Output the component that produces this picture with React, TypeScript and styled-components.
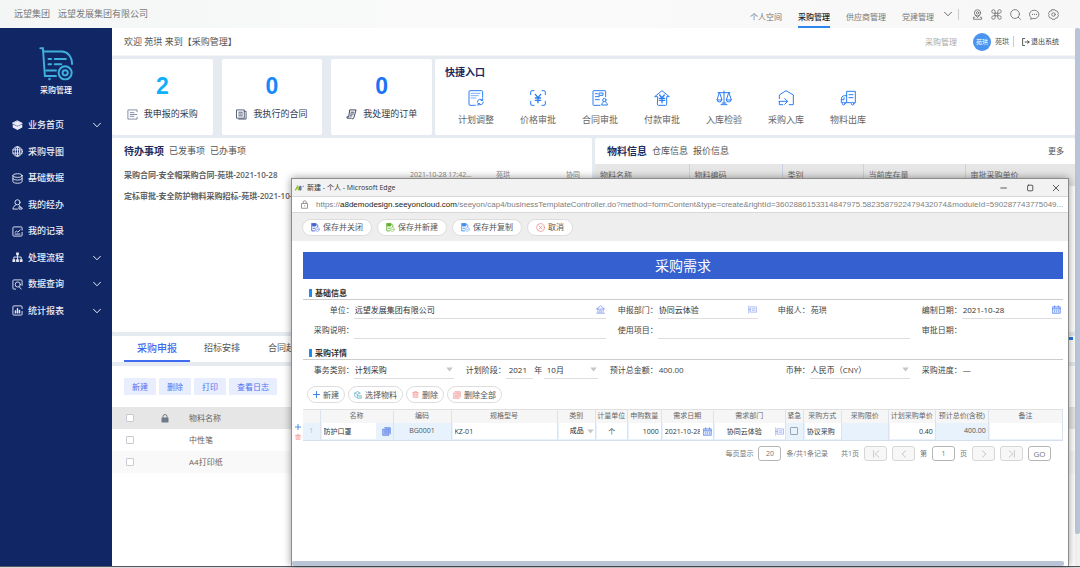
import React from 'react';
import styled, { createGlobalStyle, css } from 'styled-components';

const GlobalStyle = createGlobalStyle`
  *, *::before, *::after { box-sizing: border-box; }
  body {
    margin: 0;
    font-family: "Open Sans", "Noto Sans CJK SC", sans-serif;
    font-size: 8px;
    line-height: 12px;
    color: #555;
    background: #fff;
  }
  button, input, select { font: inherit; color: inherit; margin: 0; padding: 0; border: 0; background: none; border-radius: 0; }
  button { cursor: pointer; white-space: nowrap; }
  input, select { min-width: 0; outline: none; }
  ul { list-style: none; margin: 0; padding: 0; }
  a { color: inherit; text-decoration: none; }
  h1, h2, h3, p { margin: 0; font-weight: inherit; font-size: inherit; }
  svg { display: block; flex: none; }
`;

/* ---------- page frame ---------- */

const Page = styled.div`
  position: relative;
  display: flex;
  flex-direction: column;
  min-height: 100vh;
`;

const Header = styled.header`
  display: flex;
  align-items: stretch;
  height: 28px;
  padding: 0 21px 0 14px;
  background: linear-gradient(90deg, #f4f6f6, #fafafa 45%, #f7f7f7);
`;

const Crumbs = styled.div`
  display: flex;
  align-items: center;
  gap: 8px;
  flex: 1;
  font-size: 9px;
  color: #777;
`;

const TopNav = styled.nav`
  display: flex;
  align-items: stretch;
  gap: 16px;
`;

const TopLink = styled.a<{ $active?: boolean }>`
  display: flex;
  align-items: center;
  padding-top: ${p => (p.$active ? 7 : 5)}px;
  color: ${p => (p.$active ? '#222' : '#777')};
  font-weight: ${p => (p.$active ? 500 : 400)};
  border-bottom: ${p => (p.$active ? '2px solid #2a86ee' : '0')};
`;

const HeaderTools = styled.div`
  display: flex;
  align-items: center;
  gap: 8px;
  color: #6c6c6c;
`;

const HeaderMore = styled.span`
  display: flex;
  align-items: center;
  gap: 6px;
  margin: 0 5px 0 -6px;
`;

const IconButton = styled.button`
  display: flex;
`;

const Divider = styled.span`
  width: 1px;
  height: 11px;
  background: #ccc;
`;

const Workspace = styled.div`
  display: flex;
  flex: 1;
`;

const Taskbar = styled.footer`
  height: 2px;
  border-top: 1px solid #55575c;
  background: #ddd9dc;
`;

/* ---------- sidebar ---------- */

const Sidebar = styled.aside`
  width: 112px;
  flex: none;
  padding-top: 19px;
  background: #112665;
  color: #e8ebf5;
`;

const Brand = styled.div`
  display: flex;
  flex-direction: column;
  align-items: center;
  gap: 3px;
  font-weight: 500;
  color: #fff;
`;

const Menu = styled.ul`
  display: grid;
  grid-auto-rows: 1fr;
  height: 212px;
  margin-top: 16px;
  font-size: 9px;
  font-weight: 500;
`;

const MenuLink = styled.a`
  display: flex;
  align-items: center;
  height: 100%;
  gap: 5px;
  padding: 0 11px 0 12px;
  span { flex: 1; }
`;

/* ---------- main ---------- */

const Main = styled.main`
  flex: 1;
  min-width: 0;
  display: flex;
  flex-direction: column;
  background: #e5ebf1;
`;

const ScrollRail = styled.div`
  width: 5px;
  flex: none;
  background: #f1f1f1;
  &::before {
    content: '';
    display: block;
    height: 94%;
    border-radius: 2px;
    background: #b9c4d6;
  }
`;

const WelcomeBar = styled.div`
  display: flex;
  align-items: center;
  height: 28px;
  padding: 0 16px 0 12px;
  background: #fff;
  font-size: 9px;
  border-bottom: 1px solid #f2f4f7;
`;

const UserArea = styled.div`
  display: flex;
  align-items: center;
  gap: 4px;
  margin-left: auto;
  font-size: 7px;
`;

const ModuleName = styled.span`
  margin-right: 12px;
  font-size: 8px;
  color: #aaa;
`;

const Avatar = styled.span`
  width: 18px;
  height: 18px;
  border-radius: 50%;
  background: #4a93f0;
  color: #fff;
  font-size: 6px;
  line-height: 18px;
  text-align: center;
`;

const Exit = styled.a`
  display: flex;
  align-items: center;
  gap: 1px;
  padding-left: 4px;
  color: #444;
`;

const OverviewRow = styled.div`
  display: grid;
  grid-template-columns: minmax(0, 1fr) minmax(0, 2fr);
  gap: 3px;
  padding: 3px 0;
`;

const Stats = styled.div`
  display: grid;
  grid-template-columns: repeat(3, 1fr);
  gap: 9px;
`;

const StatCard = styled.section`
  display: flex;
  flex-direction: column;
  align-items: center;
  height: 76px;
  padding-top: 14px;
  background: #fff;
  border-radius: 2px;
`;

const StatNumber = styled.strong<{ $color: string }>`
  font: bold 23px/26px "Liberation Sans", sans-serif;
  color: ${p => p.$color};
`;

const StatLabel = styled.p`
  display: flex;
  align-items: center;
  gap: 6px;
  margin-top: 9px;
  font-size: 9px;
  color: #333a4d;
`;

const QuickPanel = styled.section`
  padding: 7px 10px 0;
  background: #fff;
  border-radius: 2px;
`;

const PanelTitle = styled.h2`
  font-size: 10px;
  font-weight: 700;
  color: #1d2a5e;
`;

const QuickList = styled.ul`
  display: flex;
  margin-top: 12px;
`;

const QuickLink = styled.a`
  display: flex;
  flex-direction: column;
  align-items: center;
  gap: 8px;
  width: 62px;
  font-size: 9px;
  color: #666;
`;

const ListsRow = styled.div`
  display: grid;
  grid-template-columns: minmax(0, 1fr) minmax(0, 1fr);
  gap: 3px;
  height: 194px;
`;

const Panel = styled.section`
  background: #fff;
  border-radius: 2px;
`;

const TabLine = styled.div`
  display: flex;
  align-items: center;
  gap: 5px;
  height: 26px;
  padding: 0 11px 0 12px;
`;

const TextTab = styled.button<{ $active?: boolean }>`
  font-size: ${p => (p.$active ? 10 : 9)}px;
  font-weight: ${p => (p.$active ? 700 : 400)};
  color: ${p => (p.$active ? '#1d2a5e' : '#555')};
`;

const More = styled.a`
  margin-left: auto;
`;

const TodoItem = styled.li`
  display: grid;
  grid-template-columns: 286px 86px 70px 1fr;
  height: 21px;
  align-items: center;
  padding-left: 12px;
  font-size: 7px;
  color: #888;
  a { font-size: 8px; font-weight: 600; color: #606060; white-space: nowrap; }
`;

const MaterialTable = styled.table`
  width: 100%;
  table-layout: fixed;
  border-collapse: collapse;
  th {
    height: 22px;
    padding: 0 0 0 5px;
    text-align: left;
    font-weight: 400;
    color: #666;
    background: #e6e6e6;
    border-right: 1px solid #c9d2e2;
  }
`;

const BottomTabs = styled.div`
  display: flex;
  height: 26px;
  margin: 4px 0;
  padding-left: 12px;
  background: #fff;
`;

const BottomTab = styled.button<{ $active?: boolean }>`
  width: ${p => (p.$active ? 66 : 64)}px;
  border-bottom: 2px solid ${p => (p.$active ? '#3f6bf0' : 'transparent')};
  font-size: ${p => (p.$active ? 10 : 9)}px;
  font-weight: ${p => (p.$active ? 500 : 400)};
  color: ${p => (p.$active ? '#3f6bf0' : '#555')};
`;

const TabMarker = styled.i`
  width: 4px;
  height: 3px;
  margin: 1px 2px 0 auto;
  background: #1f7ce8;
`;

const BottomPanel = styled.section`
  flex: 1;
  padding-top: 12px;
  background: #fff;
`;

const ActionBar = styled.div`
  display: flex;
  gap: 3px;
  padding-left: 12px;
  margin-bottom: 12px;
`;

const SoftButton = styled.button`
  height: 17px;
  padding: 0 8px;
  border-radius: 1px;
  background: #e9eefe;
  color: #4c72f2;
`;

const RecordTable = styled.table`
  width: 100%;
  table-layout: fixed;
  border-collapse: collapse;
  th, td { height: 22px; padding: 0; text-align: left; font-weight: 400; color: #666; }
  th:first-child, td:first-child { padding-left: 14px; }
  thead tr { background: #e6e6e6; }
  tbody tr:nth-child(even) { background: #f9f9f9; }
`;

const Check = styled.input.attrs({ type: 'checkbox' })`
  appearance: none;
  display: block;
  width: 8px;
  height: 8px;
  border: 1px solid #c5cad4;
  border-radius: 1px;
  background: #fff;
`;

/* ---------- pop-up window ---------- */

const Window = styled.div`
  position: absolute;
  top: 178px;
  right: 11px;
  bottom: 2px;
  left: 291px;
  display: flex;
  flex-direction: column;
  background: #fff;
  border: 1px solid #8c8c8c;
  border-bottom: 0;
  box-shadow: 0 0 8px rgba(0, 0, 0, 0.4);
`;

const TitleBar = styled.div`
  display: flex;
  align-items: center;
  height: 17px;
  padding: 0 8px 0 3px;
  background: #f2f2f2;
  font-size: 7px;
  color: #333;
  gap: 3px;
`;

const WindowControls = styled.div`
  display: flex;
  gap: 18px;
  margin-left: auto;
`;

const AddressBar = styled.div`
  display: flex;
  align-items: center;
  gap: 7px;
  height: 17px;
  padding: 0 0 0 8px;
  border: solid #d8d8d8;
  border-width: 1px 0;
  color: #808080;
  font-family: "Liberation Sans", sans-serif;
  p { white-space: nowrap; }
  b { font-weight: 400; color: #222; }
`;

const FormToolbar = styled.div`
  display: flex;
  align-items: center;
  gap: 5px;
  height: 28px;
  padding-left: 10px;
  background: #eee;
`;

const pill = css`
  display: flex;
  align-items: center;
  gap: 3px;
  border: 1px solid #dcdcdc;
  border-radius: 9px;
  background: #fff;
  color: #555;
`;

const SaveButton = styled.button`
  ${pill}
  height: 17px;
  padding: 0 8px;
`;

const RowButton = styled.button`
  ${pill}
  height: 17px;
  padding: 0 5px;
`;

const FormBody = styled.form`
  flex: 1;
  display: flex;
  flex-direction: column;
  padding: 11px 5px 0 11px;
`;

const Banner = styled.h1`
  height: 27px;
  margin-bottom: 1px;
  background: #3461cf;
  color: #fff;
  font-size: 14px;
  line-height: 28px;
  text-align: center;
`;

const SectionTitle = styled.h2`
  display: flex;
  align-items: flex-end;
  gap: 3px;
  height: 20px;
  padding: 0 0 0 6px;
  border-bottom: 1px solid #ccc;
  color: #333;
  font-weight: 600;
  &::before {
    content: '';
    width: 3px;
    height: 8px;
    margin-bottom: 2px;
    background: #1e88f5;
  }
`;

const Fields = styled.div`
  display: grid;
  grid-template-columns: repeat(15, minmax(0, 1fr));
  grid-auto-rows: 20px;
  color: #444;
`;

const FieldLabel = styled.label`
  align-self: center;
  justify-self: end;
  white-space: nowrap;
  line-height: 20px;
`;

const FieldValue = styled.div<{ $span: number; $plain?: boolean }>`
  grid-column: span ${p => p.$span};
  display: flex;
  align-items: center;
  height: 19px;
  margin-right: 1px;
  padding: 1px 1px 0;
  border-bottom: 1px solid ${p => (p.$plain ? 'transparent' : '#dedede')};
  input, select { flex: 1; width: 100%; height: 16px; color: #333; }
  select { appearance: none; }
`;

const PhaseValue = styled.div`
  grid-column: span 2;
  display: grid;
  grid-template-columns: 1fr 11px 2fr;
  margin-right: 9px;
  height: 19px;
  align-items: center;
  text-align: center;
`;

const PhaseBox = styled.div`
  display: flex;
  align-items: center;
  height: 19px;
  padding: 1px 1px 0 3px;
  border-bottom: 1px solid #dedede;
  input, select { flex: 1; width: 100%; height: 16px; color: #333; appearance: none; }
`;

const RowTools = styled.div`
  display: flex;
  gap: 3px;
  margin: 6px 0 6px 4px;
`;

const GridArea = styled.div`
  display: flex;
  margin-left: -11px;
`;

const RowActions = styled.div`
  display: flex;
  flex-direction: column;
  align-items: center;
  gap: 4px;
  width: 11px;
  padding-top: 15px;
`;

const DetailTable = styled.table`
  flex: 1;
  table-layout: fixed;
  width: 100%;
  border-collapse: collapse;
  font-size: 7px;
  border-top: 1px solid #e0e0e0;
  th, td { padding: 0; border-right: 1px solid #dde3ea; white-space: nowrap; overflow: hidden; }
  th { height: 13px; line-height: 12px; font-weight: 400; background: #f6f6f6; color: #666; }
  td { height: 18px; background: #e7f2fd; text-align: center; border-bottom: 1px solid #d5dfeb; color: #555; }
  td:first-child { color: #b4bcc6; }
`;

const CellBox = styled.div`
  display: flex;
  align-items: center;
`;

const CellInput = styled.input<{ $align?: string }>`
  flex: 1;
  width: 100%;
  height: 16px;
  padding: 0 2px;
  margin-left: 1px;
  background: #fff;
  color: #333;
  text-align: ${p => p.$align || 'left'};
`;

const CellIcon = styled.button<{ $white?: boolean }>`
  display: flex;
  align-items: center;
  justify-content: center;
  height: 16px;
  padding: 0 1px;
  background: ${p => (p.$white ? '#fff' : 'transparent')};
`;

const PickerIcon = styled(CellIcon)`
  padding: 0 2px 0 6px;
`;

const CellSelect = styled.select`
  appearance: none;
  flex: 1;
  width: 100%;
  height: 16px;
  margin-left: 1px;
  padding-left: 11px;
  background: #fff;
  color: #222;
`;

const CheckCell = styled(Check)`
  margin: 0 auto;
  border-color: #9aa3b0;
  background: transparent;
`;

const AmountCell = styled.td`
  && { text-align: right; padding-right: 2px; }
`;

const Pager = styled.div`
  display: flex;
  align-items: center;
  justify-content: flex-end;
  gap: 5px;
  padding: 5px 12px 0 0;
  font-size: 7px;
  color: #777;
`;

const PagerButton = styled.button<{ $enabled?: boolean }>`
  display: flex;
  align-items: center;
  justify-content: center;
  width: 23px;
  height: 15px;
  border: 1px solid ${p => (p.$enabled ? '#b5b5b5' : '#d6d6d6')};
  border-radius: 3px;
  background: ${p => (p.$enabled ? '#fff' : '#f7f7f7')};
  color: ${p => (p.$enabled ? '#777' : '#bbb')};
  font-size: 8px;
`;

const PagerInput = styled.input`
  width: 23px;
  height: 15px;
  border: 1px solid #b5b5b5;
  border-radius: 3px;
  text-align: center;
`;

const Total = styled.span`
  margin-right: 8px;
`;

const HorizontalRail = styled.div`
  height: 5px;
  margin-right: 4px;
  border-radius: 2px;
  background: #b9c4d6;
`;

/* ---------- drawings ---------- */

type Draw = { size?: number; color?: string; w?: number; box?: number; children: React.ReactNode };

const Icon = ({ size = 11, color = 'currentColor', w = 1, box = 12, children }: Draw) => (
  <svg width={size} height={size} viewBox={`0 0 ${box} ${box}`} fill="none" stroke={color} strokeWidth={w}
    strokeLinecap="round" strokeLinejoin="round" aria-hidden="true">{children}</svg>
);

const Chevron = () => <Icon size={8} box={8}><path d="M0.5 2.2 4 5.8 7.5 2.2" /></Icon>;

const Caret = () => (
  <svg width="7" height="5" viewBox="0 0 7 5" aria-hidden="true"><path d="M0.3 0.5h6.4L3.5 4.5z" fill="#c6c6c6" /></svg>
);

const CartLogo = () => (
  <svg width="35" height="34" viewBox="117 143 105 104" fill="none" stroke="#3fb0dc" strokeWidth="6" strokeLinecap="round" aria-hidden="true">
    <path d="M120 147h8l6 85h34" />
    <path d="M130 157h56c16 0 31 14 31 38" />
    <path d="M145 180h8M164 180h34M145 196h8M164 196h20M138 215h30" />
    <circle cx="196" cy="222" r="20" />
    <circle cx="196" cy="222" r="8" />
    <circle cx="148" cy="241" r="4" fill="#3fb0dc" stroke="none" />
  </svg>
);

const menuIcons = [
  <Icon><path d="M6 1 11.2 3.6 6 6.2 0.8 3.6z" fill="#e8ebf5" /><path d="M0.8 4.5v3.6L6 10.8l5.2-2.7V4.5L6 7.2z" fill="#e8ebf5" stroke="none" /></Icon>,
  <Icon><circle cx="6" cy="6" r="5.2" /><ellipse cx="6" cy="6" rx="2.4" ry="5.2" /><path d="M1 4.2h10M1 7.8h10M6 1v10" /></Icon>,
  <Icon><ellipse cx="6" cy="2.8" rx="5" ry="2" /><path d="M1 2.8v6.4c0 2.6 10 2.6 10 0V2.8M1 6c0 2.4 10 2.4 10 0" /></Icon>,
  <Icon><circle cx="6" cy="3.6" r="2.8" /><path d="M4.6 6.2C2.6 7 1.4 8.6 1 11h5M7.4 6.2l1 0.8" /><path d="M8 8.4h1.4v1.2H11V11H8z" /></Icon>,
  <Icon><path d="M11 4.5V2a1 1 0 0 0-1-1H2a1 1 0 0 0-1 1v8a1 1 0 0 0 1 1h8a1 1 0 0 0 1-1V7" /><path d="M3.4 8.8h5.2M3.4 6.8 5 5.6l1.4 1.2 2.4-2.6" /></Icon>,
  <Icon><path d="M2 8V5.5h8V8M6 2v7" /><g fill="#e8ebf5" stroke="none"><path d="M4.5 0.5h3v3h-3zM0.5 8h3v3h-3zM4.5 8h3v3h-3zM8.5 8h3v3h-3z" /></g></Icon>,
  <Icon><path d="M4 11H2a1 1 0 0 1-1-1V2a1 1 0 0 1 1-1h8a1 1 0 0 1 1 1v5" /><circle cx="6.3" cy="6" r="2.8" /><path d="m8 8.6 2 2.4" /></Icon>,
  <Icon><path d="M11 4V2a1 1 0 0 0-1-1H2a1 1 0 0 0-1 1v8a1 1 0 0 0 1 1h8a1 1 0 0 0 1-1V7" /><path d="M3.8 6.6v2M6 4.2v4.4M8.2 6v2.6" strokeWidth="1.6" /></Icon>,
];

const headerIcons = [
  { label: '位置', art: <><circle cx="6" cy="4.2" r="3.4" /><circle cx="6" cy="4.2" r="1.3" /><path d="M3.8 6.8 6 9.4l2.2-2.6M3 9H1.5v2.2h9V9H9" /></> },
  { label: '应用', art: <><path d="M4.6 4.6H2.8a1.9 1.9 0 1 1 1.8-1.8zM7.4 4.6V2.8a1.9 1.9 0 1 1 1.8 1.8zM4.6 7.4v1.8a1.9 1.9 0 1 1-1.8-1.8zM7.4 7.4h1.8a1.9 1.9 0 1 1-1.8 1.8zM4.6 4.6h2.8v2.8H4.6z" /></> },
  { label: '搜索', art: <><circle cx="5.5" cy="5.5" r="4.8" /><path d="m9 9 2.4 2.4" /></> },
  { label: '消息', art: <><path d="M2.2 9.4A5.2 4.6 0 1 1 4.4 10.4L2 11z" /><path d="M3.8 5.8h0.1M6 5.8h0.1M8.2 5.8h0.1" strokeWidth="1.3" /></> },
  { label: '设置', art: <><path d="M4.4 0.8h3.2l0.8 1.3 1.6 0.1 1.4 2.6-0.7 1.2 0.7 1.3L10 9.8l-1.6 0.1-0.8 1.3H4.4l-0.8-1.3L2 9.8 0.6 7.3 1.3 6 0.6 4.8 2 2.2l1.6-0.1z" /><circle cx="6" cy="6" r="1.9" /></> },
];

const statIcons = [
  <Icon color="#7d86a0"><path d="M11 3V1H1v10h10V9M3.5 4h4M3.5 6h7M3.5 8h4" /></Icon>,
  <Icon color="#4a5470"><path d="M1 1h8v9H1zM3 3.5h4M3 5.5h4M3 7.5h4" /><path d="M9 2.5h2V11H3" /></Icon>,
  <Icon color="#2c3656"><path d="M4.5 1H11L8.5 9.5C8.2 11 6.5 11 6 10H1.2L1 8.5h1.5z" /><path d="M5.5 3.5h3M5 5.5h3M4.5 7.5h2" /></Icon>,
];

const quickEntries = [
  { label: '计划调整', art: <><path d="M22 46H6a3 3 0 0 1-3-3V5a3 3 0 0 1 3-3h35a3 3 0 0 1 3 3v17" /><path d="M9 10h27M9 17h22M9 24h15" strokeOpacity="0.6" /><path d="M28 36a9 9 0 0 1 16-5M46 36a9 9 0 0 1-16 5M44 26v5h-5M30 46v-5h5" /></> },
  { label: '价格审批', art: <><path d="M2 14V6a4 4 0 0 1 4-4h6M36 2h6a4 4 0 0 1 4 4v8M46 34v8a4 4 0 0 1-4 4h-6M12 46H6a4 4 0 0 1-4-4v-8" /><path d="m16 13 8 10 8-10M24 23v15M16 24h16M16 31h16" strokeWidth="4" /></> },
  { label: '合同审批', art: <><path d="M24 46H5a2 2 0 0 1-2-2V4a2 2 0 0 1 2-2h34a2 2 0 0 1 2 2v16" /><path d="M10 11h6M10 20h12M10 29h12M22 9h11v7H22z" /><circle cx="37" cy="30" r="5" /><path d="M34 35c-1 5-5 4-5 10h17c0-6-4-5-5-10" /></> },
  { label: '付款审批', art: <><path d="M10 20H2L24 2l22 18h-8v23a3 3 0 0 1-3 3H13a3 3 0 0 1-3-3z" /><path d="m17 15 7 9 7-9M24 24v14M16 25h16M16 31h16" strokeWidth="4" /></> },
  { label: '入库检验', art: <><path d="M24 3v38M6 8h36M15 44h18M10 8 3 30h14zM38 8l-7 22h14z" /><path d="M3 30a7 6 0 0 0 14 0M31 30a7 6 0 0 0 14 0M18 39h12" /></> },
  { label: '采购入库', art: <><path d="M4 26V15L24 2l22 13v29H34" /><path d="M3 34h25M20 26l9 8-9 9M4 34v10h10" /></> },
  { label: '物料出库', art: <><path d="M20 38V4h26v34h-3M33 38H16M20 17h-7c-6 0-9 6-9 12v9h3M4 29h8v-6" /><path d="M27 14h12M27 23h12" /><circle cx="11" cy="41" r="4" /><circle cx="38" cy="41" r="4" /></> },
];

const SaveIcon = ({ a, b }: { a: string; b: string }) => (
  <Icon size={9} color={a} w={1.2}><path d="M1 1h6l2 2v2M1 1v9.5h4" /><path d="M2.5 1h4v3h-4z" fill={a} /><path d="M3 7h2" /><circle cx="8.5" cy="8.5" r="2.7" stroke={b} /><path d="M7.3 8.5h2.4" stroke={b} /></Icon>
);
const Plus = ({ size = 7 }: { size?: number }) => <Icon size={size} color="#3f86e8" w={1.2} box={8}><path d="M4 0.5v7M0.5 4h7" /></Icon>;
const Trash = ({ size = 7 }: { size?: number }) => <Icon size={size} color="#f58f8f"><path d="M1 3h10M4 3V1h4v2M2 3v8h8V3" fill="#fde3e3" /><path d="M4.7 5.5v3M7.3 5.5v3" /></Icon>;
const TrashAll = () => <Icon size={8} color="#f58f8f"><path d="M3 1h8v8M1 3h8v8H1z" fill="#fde3e3" /><path d="M3 6h4M3 8.5h4" /></Icon>;
const Cube = () => <Icon size={8} color="#5fb0c8"><path d="M5 1 1 3v5l4 2M1 3l4 2 4-2-4-2M5 5v2M9 3v1" /><path d="M6 7h5v4H6zM7.5 9h2" /></Icon>;
const House = () => <Icon size={9} color="#7d95f0"><path d="M1 5 6 1l5 4zM2.5 5v5M9.5 5v5M1 11h10M5 10V7h2v3" /></Icon>;
const Dept = () => <Icon size={9} color="#94a8f2"><path d="M1 1v10M3.5 2.5h8v7h-8zM1 6h2.5M5.5 5h4M5.5 7h4" /></Icon>;
const Calendar = () => <Icon size={9} color="#4f7ff0"><path d="M1 2.5h10V11H1z" fill="#dfe9fd" /><path d="M3.5 1v2M8.5 1v2M1 5h10M3.5 7h0.1M6 7h0.1M8.5 7h0.1M3.5 9h0.1M6 9h0.1M8.5 9h0.1" /></Icon>;
const Sheets = () => <Icon size={9} color="#4f74dd"><path d="M3.5 1H11v8M1.5 3H9v8H1.5z" fill="#a9c0f5" /><path d="M3.5 5.5H7M3.5 8H7" /></Icon>;

/* ---------- data ---------- */

const menu: [string, boolean][] = [
  ['业务首页', true], ['采购导图', false], ['基础数据', false], ['我的经办', false],
  ['我的记录', false], ['处理流程', true], ['数据查询', true], ['统计报表', true],
];

const stats = [
  { value: 2, label: '我申报的采购', color: '#0fb0fb' },
  { value: 0, label: '我执行的合同', color: '#1588fb' },
  { value: 0, label: '我处理的订单', color: '#1a73f5' },
];

const todos = [
  { title: '采购合同-安全帽采购合同-苑珙-2021-10-28', date: '2021-10-28 17:42...', who: '苑珙', kind: '协同' },
  { title: '定标审批-安全防护物料采购招标-苑珙-2021-10-28', date: '', who: '', kind: '' },
];

const materialColumns: [string, number][] = [['物料名称', 94], ['物料编码', 93], ['类别', 81], ['当前库存量', 102], ['审批采购单价', 111]];

const detailColumns: [string, number][] = [
  ['', 17], ['名称', 73], ['编码', 58], ['规格型号', 106], ['类别', 38], ['计量单位', 32], ['申购数量', 34],
  ['需求日期', 52], ['需求部门', 72], ['紧急', 18], ['采购方式', 38], ['采购限价', 47], ['计划采购单价', 47],
  ['预计总价(含税)', 53], ['备注', 74],
];

/* ---------- sections ---------- */

const PurchaseForm = () => (
  <FormBody>
    <Banner>采购需求</Banner>
    <SectionTitle>基础信息</SectionTitle>
    <Fields>
      <FieldLabel htmlFor="unit">单位：</FieldLabel>
      <FieldValue $span={5}><input id="unit" defaultValue="远望发展集团有限公司" /><House /></FieldValue>
      <FieldLabel htmlFor="dept">申报部门：</FieldLabel>
      <FieldValue $span={2}><input id="dept" defaultValue="协同云体验" /><Dept /></FieldValue>
      <FieldLabel as="span">申报人：</FieldLabel>
      <FieldValue $span={2} $plain>苑珙</FieldValue>
      <FieldLabel htmlFor="made">编制日期：</FieldLabel>
      <FieldValue $span={2}><input id="made" defaultValue="2021-10-28" /><Calendar /></FieldValue>
      <FieldLabel htmlFor="note">采购说明：</FieldLabel>
      <FieldValue $span={5}><input id="note" /></FieldValue>
      <FieldLabel htmlFor="project">使用项目：</FieldLabel>
      <FieldValue $span={5}><input id="project" /></FieldValue>
      <FieldLabel as="span">审批日期：</FieldLabel>
    </Fields>
    <SectionTitle>采购详情</SectionTitle>
    <Fields>
      <FieldLabel htmlFor="type">事务类别：</FieldLabel>
      <FieldValue $span={2}><select id="type"><option>计划采购</option></select><Caret /></FieldValue>
      <FieldLabel htmlFor="year">计划阶段：</FieldLabel>
      <PhaseValue>
        <PhaseBox><input id="year" defaultValue="2021" /></PhaseBox>
        <span>年</span>
        <PhaseBox><select aria-label="月份"><option>10月</option></select><Caret /></PhaseBox>
      </PhaseValue>
      <FieldLabel as="span">预计总金额：</FieldLabel>
      <FieldValue $span={2} $plain>400.00</FieldValue>
      <FieldLabel htmlFor="currency">币种：</FieldLabel>
      <FieldValue $span={2}><select id="currency"><option>人民币（CNY）</option></select><Caret /></FieldValue>
      <FieldLabel as="span">采购进度：</FieldLabel>
      <FieldValue $span={2} $plain>—</FieldValue>
    </Fields>
    <RowTools>
      <RowButton type="button"><Plus />新建</RowButton>
      <RowButton type="button"><Cube />选择物料</RowButton>
      <RowButton type="button"><Trash />删除</RowButton>
      <RowButton type="button"><TrashAll />删除全部</RowButton>
    </RowTools>
    <GridArea>
      <RowActions>
        <IconButton type="button" aria-label="添加行"><Plus size={6} /></IconButton>
        <IconButton type="button" aria-label="删除行"><Trash size={6} /></IconButton>
      </RowActions>
      <DetailTable>
        <colgroup>{detailColumns.map(([n, w]) => <col key={n} width={w} />)}</colgroup>
        <thead><tr>{detailColumns.map(([n]) => <th key={n}>{n}</th>)}</tr></thead>
        <tbody>
          <tr>
            <td>1</td>
            <td><CellBox><CellInput aria-label="名称" defaultValue="防护口罩" /><PickerIcon type="button" aria-label="选择"><Sheets /></PickerIcon></CellBox></td>
            <td>BG0001</td>
            <td><CellBox><CellInput aria-label="规格型号" defaultValue="KZ-01" /></CellBox></td>
            <td><CellBox><CellSelect aria-label="类别"><option>成品</option></CellSelect><CellIcon as="span" $white><Caret /></CellIcon></CellBox></td>
            <td><CellBox><CellInput aria-label="计量单位" $align="center" defaultValue="个" /></CellBox></td>
            <td><CellBox><CellInput aria-label="申购数量" $align="right" defaultValue="1000" /></CellBox></td>
            <td><CellBox><CellInput aria-label="需求日期" defaultValue="2021-10-28" /><CellIcon type="button" $white aria-label="日期"><Calendar /></CellIcon></CellBox></td>
            <td><CellBox><CellInput aria-label="需求部门" $align="center" defaultValue="协同云体验" /><CellIcon type="button" $white aria-label="部门"><Dept /></CellIcon></CellBox></td>
            <td><CheckCell aria-label="紧急" /></td>
            <td><CellBox><CellInput aria-label="采购方式" defaultValue="协议采购" /></CellBox></td>
            <td />
            <td><CellBox><CellInput aria-label="计划采购单价" $align="right" defaultValue="0.40" /></CellBox></td>
            <AmountCell>400.00</AmountCell>
            <td><CellBox><CellInput aria-label="备注" /></CellBox></td>
          </tr>
        </tbody>
      </DetailTable>
    </GridArea>
    <Pager>
      <label htmlFor="size">每页显示</label><PagerInput id="size" defaultValue="20" />
      <Total>条/共1条记录</Total><span>共1页</span>
      <PagerButton type="button" aria-label="首页"><Icon size={8} box={10}><path d="M2 1v8M8.5 1 4 5l4.5 4" /></Icon></PagerButton>
      <PagerButton type="button" aria-label="上一页"><Icon size={8} box={10}><path d="M7 1 2.5 5 7 9" /></Icon></PagerButton>
      <label htmlFor="page">第</label><PagerInput id="page" defaultValue="1" /><span>页</span>
      <PagerButton type="button" aria-label="下一页"><Icon size={8} box={10}><path d="M3 1l4.5 4L3 9" /></Icon></PagerButton>
      <PagerButton type="button" aria-label="末页"><Icon size={8} box={10}><path d="M8 1v8M1.5 1 6 5 1.5 9" /></Icon></PagerButton>
      <PagerButton type="button" $enabled>GO</PagerButton>
    </Pager>
  </FormBody>
);

const PopupWindow = () => (
  <Window role="dialog" aria-label="新建">
    <TitleBar>
      <svg width="9" height="6" viewBox="0 0 27 18" fill="none" strokeWidth="3" aria-hidden="true">
        <path d="M1 16 8 4l3 12" stroke="#8fc31f" strokeWidth="4" /><path d="M14 4h4v11h-4zM14 9h4" stroke="#4a5fa8" /><path d="M23 4h3" stroke="#4a5fa8" />
      </svg>
      <span>新建 - 个人 - Microsoft Edge</span>
      <WindowControls>
        <IconButton type="button" aria-label="最小化"><Icon size={8} box={10}><path d="M1 5h7" /></Icon></IconButton>
        <IconButton type="button" aria-label="最大化"><Icon size={8} box={10}><rect x="2" y="1.5" width="6.5" height="7" rx="1" /></Icon></IconButton>
        <IconButton type="button" aria-label="关闭"><Icon size={8} box={10}><path d="m1.5 1.5 7 7M8.5 1.5l-7 7" /></Icon></IconButton>
      </WindowControls>
    </TitleBar>
    <AddressBar>
      <Icon size={9} color="#777"><path d="M2.5 4.5H10V11H2.5zM4.3 4.5V3a2 2 0 0 1 4 0v1.5M6.2 7.5v0.5" /></Icon>
      <p>https://<b>a8demodesign.seeyoncloud.com</b>/seeyon/cap4/businessTemplateController.do?method=formContent&amp;type=create&amp;rightId=3602886153314847975.5823587922479432074&amp;moduleId=590287743775049...</p>
    </AddressBar>
    <FormToolbar>
      <SaveButton><SaveIcon a="#3f62d8" b="#9aaef0" />保存并关闭</SaveButton>
      <SaveButton><SaveIcon a="#5fae2e" b="#a8d285" />保存并新建</SaveButton>
      <SaveButton><SaveIcon a="#3f8ff0" b="#9cc8fa" />保存并复制</SaveButton>
      <SaveButton><Icon size={9} color="#f08a8a"><circle cx="6" cy="6" r="5.2" /><path d="m4 4 4 4M8 4 4 8" /></Icon>取消</SaveButton>
    </FormToolbar>
    <PurchaseForm />
    <HorizontalRail />
  </Window>
);

export default function App() {
  return (
    <Page>
      <GlobalStyle />
      <Header>
        <Crumbs><span>远望集团</span><span>远望发展集团有限公司</span></Crumbs>
        <TopNav>
          <TopLink href="#">个人空间</TopLink>
          <TopLink href="#" $active>采购管理</TopLink>
          <TopLink href="#">供应商管理</TopLink>
          <TopLink href="#">党建管理</TopLink>
          <HeaderTools>
            <HeaderMore><Chevron /><Divider /></HeaderMore>
            {headerIcons.map(i => <IconButton key={i.label} aria-label={i.label}><Icon w={0.9}>{i.art}</Icon></IconButton>)}
          </HeaderTools>
        </TopNav>
      </Header>
      <Workspace>
        <Sidebar>
          <Brand><CartLogo />采购管理</Brand>
          <Menu>
            {menu.map(([label, open], i) => (
              <li key={label}><MenuLink href="#">{menuIcons[i]}<span>{label}</span>{open && <Chevron />}</MenuLink></li>
            ))}
          </Menu>
        </Sidebar>
        <Main>
          <WelcomeBar>
            <span>欢迎 苑珙 来到【采购管理】</span>
            <UserArea>
              <ModuleName>采购管理</ModuleName>
              <Avatar>苑珙</Avatar>
              <span>苑珙</span>
              <Divider />
              <Exit href="#"><Icon size={8} box={9}><path d="M3 0.5H0.7v8H3M3.5 4.5H8M6.3 3 8 4.5 6.3 6" /></Icon>退出系统</Exit>
            </UserArea>
          </WelcomeBar>
          <OverviewRow>
            <Stats>
              {stats.map((s, i) => (
                <StatCard key={s.label}>
                  <StatNumber $color={s.color}>{s.value}</StatNumber>
                  <StatLabel>{statIcons[i]}{s.label}</StatLabel>
                </StatCard>
              ))}
            </Stats>
            <QuickPanel>
              <PanelTitle>快捷入口</PanelTitle>
              <QuickList>
                {quickEntries.map(q => (
                  <li key={q.label}><QuickLink href="#"><Icon size={16} color="#2b7df5" w={3} box={48}>{q.art}</Icon>{q.label}</QuickLink></li>
                ))}
              </QuickList>
            </QuickPanel>
          </OverviewRow>
          <ListsRow>
            <Panel>
              <TabLine><TextTab $active>待办事项</TextTab><TextTab>已发事项</TextTab><TextTab>已办事项</TextTab></TabLine>
              <ul>
                {todos.map(t => (
                  <TodoItem key={t.title}><a href="#">{t.title}</a><span>{t.date}</span><span>{t.who}</span><span>{t.kind}</span></TodoItem>
                ))}
              </ul>
            </Panel>
            <Panel>
              <TabLine><TextTab $active>物料信息</TextTab><TextTab>仓库信息</TextTab><TextTab>报价信息</TextTab><More href="#">更多</More></TabLine>
              <MaterialTable>
                <colgroup>{materialColumns.map(([n, w]) => <col key={n} width={w} />)}</colgroup>
                <thead><tr>{materialColumns.map(([n]) => <th key={n}>{n}</th>)}</tr></thead>
              </MaterialTable>
            </Panel>
          </ListsRow>
          <BottomTabs>
            <BottomTab $active>采购申报</BottomTab><BottomTab>招标安排</BottomTab><BottomTab>合同起草</BottomTab><TabMarker />
          </BottomTabs>
          <BottomPanel>
            <ActionBar>
              <SoftButton>新建</SoftButton><SoftButton>删除</SoftButton><SoftButton>打印</SoftButton><SoftButton>查看日志</SoftButton>
            </ActionBar>
            <RecordTable>
              <colgroup><col width="49" /><col width="28" /><col /></colgroup>
              <thead>
                <tr>
                  <th><Check aria-label="全选" /></th>
                  <th><svg width="8" height="9" viewBox="0 0 8 9" aria-hidden="true"><path d="M2 4V2.5a2 2 0 0 1 4 0V4" fill="none" stroke="#6f7a88" /><rect x="0.5" y="3.5" width="7" height="5" rx="0.6" fill="#6f7a88" /></svg></th>
                  <th>物料名称</th>
                </tr>
              </thead>
              <tbody>
                <tr><td><Check aria-label="中性笔" /></td><td /><td>中性笔</td></tr>
                <tr><td><Check aria-label="A4打印纸" /></td><td /><td>A4打印纸</td></tr>
              </tbody>
            </RecordTable>
          </BottomPanel>
        </Main>
        <ScrollRail />
      </Workspace>
      <Taskbar />
      <PopupWindow />
    </Page>
  );
}
